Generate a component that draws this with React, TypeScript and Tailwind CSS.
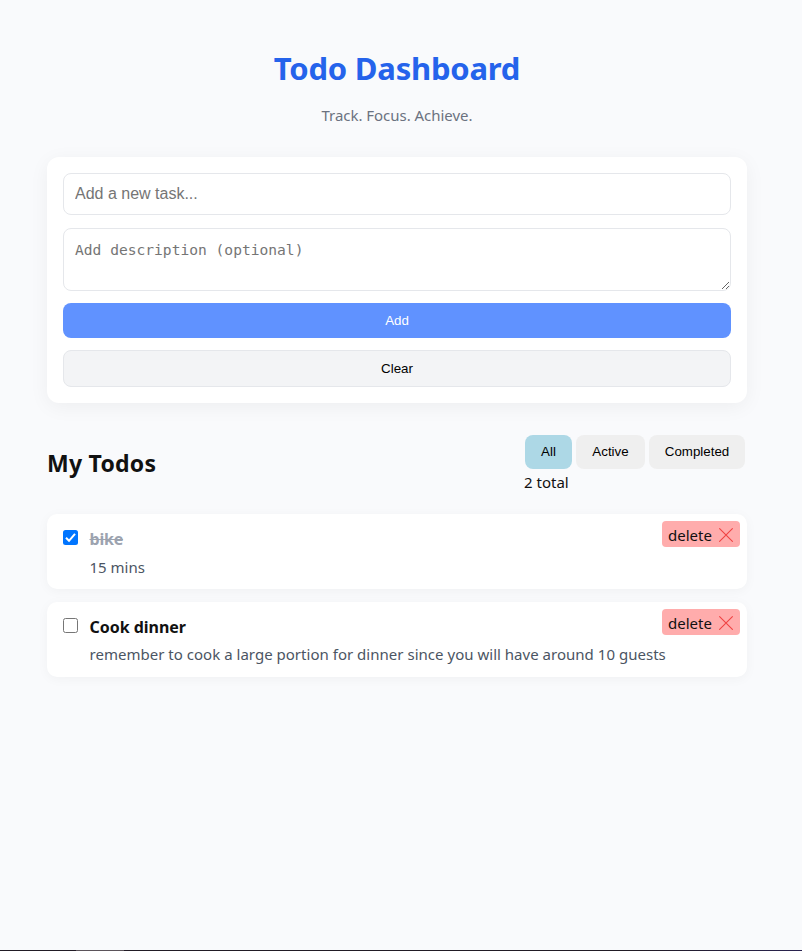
import { useState } from "react";

type Todo = { id: number; title: string; note: string; done: boolean; titleSpacing: string; noteSpacing: string };

const initialTodos: Todo[] = [
  { id: 1, title: "bike", note: "15 mins", done: true, titleSpacing: "tracking-[-0.2px]", noteSpacing: "mt-1 tracking-[0px]" },
  {
    id: 2,
    title: "Cook dinner",
    note: "remember to cook a large portion for dinner since you will have around 10 guests",
    done: false,
    titleSpacing: "tracking-[-0.03px]",
    noteSpacing: "mt-[3px] tracking-[0.02px]",
  },
];

const filters = [
  { name: "All", width: "w-[47px]" },
  { name: "Active", width: "w-[69px]" },
  { name: "Completed", width: "w-24" },
];

function DeleteButton({ onClick }: { onClick: () => void }) {
  return (
    <button
      onClick={onClick}
      className="flex h-[26px] w-[78px] shrink-0 items-center justify-between rounded-[4px] bg-[#ffacac] pl-1.5 pr-[7px] text-[15px] leading-[26px]"
    >
      <span className="pt-px whitespace-nowrap">delete</span>
      <svg className="mt-[2px]" width="14" height="14" viewBox="0 0 14 14" fill="none" stroke="#f04444" strokeWidth="1.1" strokeLinecap="round">
        <path d="M0.6 0.6 13.4 13.4M13.4 0.6 0.6 13.4" />
      </svg>
    </button>
  );
}

function TodoCard({ todo, onToggle, onDelete }: { todo: Todo; onToggle: () => void; onDelete: () => void }) {
  return (
    <li className="flex h-[75px] items-start rounded-[10px] bg-white pl-[15.5px] pr-[7px] pt-[7px] shadow-[0_2px_12px_rgba(0,0,0,0.04)]">
      <button
        role="checkbox"
        aria-checked={todo.done}
        aria-label={todo.title}
        onClick={onToggle}
        className={
          "mt-[9px] flex size-[15px] shrink-0 items-center justify-center rounded-[2.5px] " +
          (todo.done ? "bg-[#0075ff]" : "border border-[#767676] bg-white")
        }
      >
        {todo.done && (
          <svg width="15" height="15" viewBox="0 0 15 15" fill="none" stroke="white" strokeWidth="2">
            <path d="M3 7.8 6 10.8 12 3.8" />
          </svg>
        )}
      </button>
      <div className="ml-[12px] min-w-0 flex-1 whitespace-nowrap pt-[6px]">
        <div className={"h-6 text-[16px] font-bold leading-6 " + todo.titleSpacing + (todo.done ? " text-[#9ca3af] line-through" : " text-[#111]")}>
          {todo.title}
        </div>
        <div className={"h-6 text-[15px] leading-6 text-[#4b5563] " + todo.noteSpacing}>{todo.note}</div>
      </div>
      <DeleteButton onClick={onDelete} />
    </li>
  );
}

export default function App() {
  const [todos, setTodos] = useState(initialTodos);
  const [filter, setFilter] = useState("All");
  const [task, setTask] = useState("");
  const [note, setNote] = useState("");

  const clear = () => {
    setTask("");
    setNote("");
  };
  const add = () => {
    if (!task.trim()) return;
    setTodos([...todos, { id: Date.now(), title: task, note, done: false, titleSpacing: "", noteSpacing: "mt-1" }]);
    clear();
  };
  const visible = todos.filter((t) => filter === "All" || (filter === "Completed") === t.done);

  return (
    <div className="flex h-[951px] flex-col justify-between overflow-hidden bg-[#f9fafc] font-['Noto_Sans','Open_Sans',sans-serif] text-[#111]">
      <main className="ml-[47px] w-[700px] pt-[46px]">
        <header className="h-[111px] text-center">
          <h1 className="h-[44px] whitespace-nowrap text-[31px] font-bold leading-[44px] tracking-[-0.22px] text-[#2563eb]">Todo Dashboard</h1>
          <p className="mt-[13px] h-6 whitespace-nowrap text-[15px] leading-6 tracking-[-0.03px] text-[#6b7280]">Track. Focus. Achieve.</p>
        </header>

        <section className="flex h-[246px] flex-col rounded-xl bg-white p-4 font-['Liberation_Sans',Arial,sans-serif] shadow-[0_4px_20px_rgba(0,0,0,0.05)]">
          <input
            value={task}
            onChange={(e) => setTask(e.target.value)}
            placeholder="Add a new task..."
            className="h-[42px] w-full rounded-lg border border-[#e5e7eb] px-[11px] text-base outline-none placeholder:text-[#757575]"
          />
          <textarea
            value={note}
            onChange={(e) => setNote(e.target.value)}
            placeholder="Add description (optional)"
            className="mt-[13px] block h-[63px] w-full resize rounded-lg border border-[#e5e7eb] px-[11px] py-[11px] font-['DejaVu_Sans_Mono',monospace] text-[14.6px] leading-[19px] outline-none placeholder:text-[#757575]"
          />
          <button onClick={add} className="mt-3 h-[35px] shrink-0 rounded-lg bg-[#6092ff] text-[13.33px] text-white">
            Add
          </button>
          <button onClick={clear} className="mt-3 h-[37px] shrink-0 rounded-lg border border-[#e5e7eb] bg-[#f3f4f6] text-[13.33px] text-black">
            Clear
          </button>
        </section>

        <div className="mt-8 flex h-[79px] items-start justify-between">
          <h2 className="mt-3 whitespace-nowrap text-[23px] font-bold leading-8 tracking-[0.25px]">My Todos</h2>
          <div className="w-[223px]">
            <div className="flex gap-1 pl-px">
              {filters.map((f) => (
                <button
                  key={f.name}
                  onClick={() => setFilter(f.name)}
                  className={
                    "h-[34px] shrink-0 rounded-lg font-['Liberation_Sans',Arial,sans-serif] text-[13.33px] text-black " +
                    f.width +
                    (filter === f.name ? " bg-[#add8e6]" : " bg-[#efefef]")
                  }
                >
                  {f.name}
                </button>
              ))}
            </div>
            <div className="mt-px whitespace-nowrap text-[15px] leading-6">{todos.length} total</div>
          </div>
        </div>

        <ul className="flex flex-col gap-[13px]">
          {visible.map((t) => (
            <TodoCard
              key={t.id}
              todo={t}
              onToggle={() => setTodos(todos.map((x) => (x.id === t.id ? { ...x, done: !x.done } : x)))}
              onDelete={() => setTodos(todos.filter((x) => x.id !== t.id))}
            />
          ))}
        </ul>
      </main>
      <footer className="h-px bg-linear-to-r from-[#211b25] from-80% to-[#2a2350] pl-[76px]">
        <div className="h-px w-12 bg-[#5b535a]" />
      </footer>
    </div>
  );
}
